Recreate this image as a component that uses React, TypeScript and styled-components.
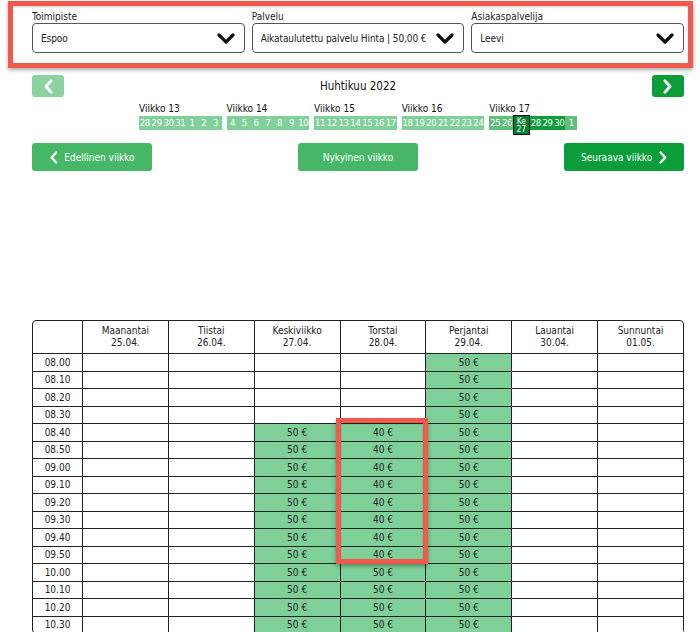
import styled, { createGlobalStyle } from "styled-components";

const GlobalStyle = createGlobalStyle`
  body {
    margin: 0;
    background: #fff;
    font-family: "DejaVu Sans Condensed", "DejaVu Sans", sans-serif;
    font-stretch: condensed;
    color: #222;
  }
`;

const times = [
  "08.00", "08.10", "08.20", "08.30", "08.40", "08.50", "09.00", "09.10",
  "09.20", "09.30", "09.40", "09.50", "10.00", "10.10", "10.20", "10.30",
];

const days = [
  { name: "Maanantai", date: "25.04." },
  { name: "Tiistai", date: "26.04." },
  { name: "Keskiviikko", date: "27.04." },
  { name: "Torstai", date: "28.04." },
  { name: "Perjantai", date: "29.04." },
  { name: "Lauantai", date: "30.04." },
  { name: "Sunnuntai", date: "01.05." },
];

// price for a given day index and time row, or null when not bookable
const priceFor = (day: number, row: number): string | null => {
  if (day === 4) return "50 €";
  if (day === 2 && row >= 4) return "50 €";
  if (day === 3 && row >= 4) return row <= 11 ? "40 €" : "50 €";
  return null;
};

type DayTone = "light" | "mid" | "dark" | "today";

const weeks: { label: string; days: { n: string; tone: DayTone }[] }[] = [
  { label: "Viikko 13", days: ["28", "29", "30", "31", "1", "2", "3"].map((n) => ({ n, tone: "light" as DayTone })) },
  { label: "Viikko 14", days: ["4", "5", "6", "7", "8", "9", "10"].map((n) => ({ n, tone: "light" as DayTone })) },
  { label: "Viikko 15", days: ["11", "12", "13", "14", "15", "16", "17"].map((n) => ({ n, tone: "light" as DayTone })) },
  { label: "Viikko 16", days: ["18", "19", "20", "21", "22", "23", "24"].map((n) => ({ n, tone: "light" as DayTone })) },
  {
    label: "Viikko 17",
    days: [
      { n: "25", tone: "mid" },
      { n: "26", tone: "mid" },
      { n: "27", tone: "today" },
      { n: "28", tone: "dark" },
      { n: "29", tone: "dark" },
      { n: "30", tone: "dark" },
      { n: "1", tone: "mid" },
    ],
  },
];

const Chevron = ({ dir, size = 13 }: { dir: "left" | "right" | "down"; size?: number }) => {
  if (dir === "down") {
    return (
      <svg width="18" height="11" viewBox="0 0 18 11">
        <polyline points="2,2 9,9 16,2" fill="none" stroke="#111" strokeWidth="3.2" strokeLinecap="round" strokeLinejoin="round" />
      </svg>
    );
  }
  const pts = dir === "left" ? "6,1.5 1.5,6.5 6,11.5" : "1.5,1.5 6,6.5 1.5,11.5";
  return (
    <svg width={size * 0.6} height={size} viewBox="0 0 7.5 13">
      <polyline points={pts} fill="none" stroke="#fff" strokeWidth="2.4" strokeLinecap="round" strokeLinejoin="round" />
    </svg>
  );
};

const App = () => {
  return (
    <Page>
      <GlobalStyle />
      <Filters>
        <Field>
          <Label>Toimipiste</Label>
          <Select>
            <span>Espoo</span>
            <Chevron dir="down" />
          </Select>
        </Field>
        <Field>
          <Label>Palvelu</Label>
          <Select>
            <span>Aikataulutettu palvelu Hinta | 50,00 €</span>
            <Chevron dir="down" />
          </Select>
        </Field>
        <Field>
          <Label>Asiakaspalvelija</Label>
          <Select>
            <span>Leevi</span>
            <Chevron dir="down" />
          </Select>
        </Field>
        <Highlight style={{ top: -9, left: -24, width: 685, height: 67 }} />
      </Filters>

      <MonthNav>
        <ArrowButton $tone="light">
          <Chevron dir="left" size={15} />
        </ArrowButton>
        <MonthTitle>Huhtikuu 2022</MonthTitle>
        <ArrowButton $tone="dark">
          <Chevron dir="right" size={15} />
        </ArrowButton>
      </MonthNav>

      <WeekStrip>
        {weeks.map((w) => (
          <Week key={w.label}>
            <WeekLabel>{w.label}</WeekLabel>
            <DayRow>
              {w.days.map((d) =>
                d.tone === "today" ? (
                  <Today key={d.n}>
                    <TodayLine>Ke</TodayLine>
                    <TodayLine>{d.n}</TodayLine>
                  </Today>
                ) : (
                  <DayCell key={d.n} $tone={d.tone}>
                    {d.n}
                  </DayCell>
                )
              )}
            </DayRow>
          </Week>
        ))}
      </WeekStrip>

      <ButtonRow>
        <WeekButton $tone="mid">
          <Chevron dir="left" />
          Edellinen viikko
        </WeekButton>
        <WeekButton $tone="mid">Nykyinen viikko</WeekButton>
        <WeekButton $tone="dark">
          Seuraava viikko
          <Chevron dir="right" />
        </WeekButton>
      </ButtonRow>

      <TableWrap>
        <Calendar>
          <colgroup>
            <col style={{ width: 49 }} />
            {days.map((d) => (
              <col key={d.name} />
            ))}
          </colgroup>
          <thead>
            <tr>
              <HeadCell />
              {days.map((d) => (
                <HeadCell key={d.name}>
                  {d.name}
                  <br />
                  {d.date}
                </HeadCell>
              ))}
            </tr>
          </thead>
          <tbody>
            {times.map((t, row) => (
              <tr key={t}>
                <TimeCell>{t}</TimeCell>
                {days.map((d, i) => {
                  const price = priceFor(i, row);
                  return (
                    <SlotCell key={d.name} $free={!!price}>
                      {price}
                    </SlotCell>
                  );
                })}
              </tr>
            ))}
          </tbody>
        </Calendar>
        <Highlight style={{ top: 98, left: 304, width: 92, height: 146 }} />
      </TableWrap>
    </Page>
  );
};

export default App;

const Page = styled.div`
  width: 652px;
  padding: 10px 16px 0 32px;
  font-size: 10px;
`;

const Filters = styled.div`
  position: relative;
  display: grid;
  grid-template-columns: repeat(3, 1fr);
  gap: 7px;
`;

const Field = styled.div`
  display: flex;
  flex-direction: column;
  min-width: 0;
`;

const Label = styled.label`
  font-size: 10px;
  line-height: 13px;
  color: #222;
`;

const Select = styled.div`
  height: 30px;
  box-sizing: border-box;
  border: 1px solid #555;
  border-radius: 4px;
  display: flex;
  align-items: center;
  justify-content: space-between;
  gap: 6px;
  padding: 0 9px 0 8px;
  font-size: 10px;
  background: #fff;

  span {
    white-space: nowrap;
    overflow: hidden;
    letter-spacing: -0.1px;
  }

  svg {
    flex-shrink: 0;
  }
`;

const Highlight = styled.div`
  position: absolute;
  box-sizing: border-box;
  border: 5px solid #f05a4d;
  box-shadow: 0 2px 4px rgba(0, 0, 0, 0.35), inset 0 1px 2px rgba(0, 0, 0, 0.2);
  pointer-events: none;
`;

const MonthNav = styled.div`
  margin-top: 22px;
  display: flex;
  align-items: center;
  justify-content: space-between;
  height: 22px;
`;

const ArrowButton = styled.div<{ $tone: "light" | "dark" }>`
  width: 32px;
  height: 22px;
  border-radius: 3px;
  display: flex;
  align-items: center;
  justify-content: center;
  background: ${(p) => (p.$tone === "light" ? "#8bd3a0" : "#0c9d3b")};
`;

const MonthTitle = styled.div`
  font-size: 11.5px;
  color: #111;
`;

const WeekStrip = styled.div`
  margin-top: 6px;
  display: flex;
  justify-content: center;
  gap: 5px;
`;

const Week = styled.div`
  display: flex;
  flex-direction: column;
`;

const WeekLabel = styled.div`
  font-size: 10px;
  line-height: 12px;
  margin-bottom: 1px;
  color: #111;
`;

const DayRow = styled.div`
  display: flex;
  height: 14px;
  align-items: flex-start;
`;

const toneColors: Record<string, string> = {
  light: "#80d09a",
  mid: "#5ec07a",
  dark: "#0e9d3c",
};

const DayCell = styled.div<{ $tone: DayTone }>`
  width: 11.8px;
  height: 14px;
  line-height: 14px;
  text-align: center;
  font-size: 9.5px;
  letter-spacing: -0.4px;
  color: #fff;
  background: ${(p) => toneColors[p.$tone]};
`;

const Today = styled.div`
  position: relative;
  top: -1px;
  width: 17px;
  height: 20px;
  box-sizing: border-box;
  border: 1.5px solid #111;
  background: #0a7d2f;
  color: #fff;
  display: flex;
  flex-direction: column;
  align-items: center;
  justify-content: center;
`;

const TodayLine = styled.span`
  display: block;
  font-size: 8.5px;
  line-height: 8.5px;
  height: 8.5px;
`;

const ButtonRow = styled.div`
  margin-top: 13px;
  display: flex;
  justify-content: space-between;
`;

const WeekButton = styled.div<{ $tone: "mid" | "dark" }>`
  width: 120px;
  height: 28px;
  border-radius: 3px;
  display: flex;
  align-items: center;
  justify-content: center;
  gap: 7px;
  color: #fff;
  font-size: 10px;
  background: ${(p) => (p.$tone === "mid" ? "#46b767" : "#0c9d3b")};
`;

const TableWrap = styled.div`
  position: relative;
  margin-top: 149px;
`;

const Calendar = styled.table`
  width: 652px;
  table-layout: fixed;
  border-collapse: separate;
  border-spacing: 0;
  border: 1px solid #222;
  border-radius: 4px;
  font-size: 10px;

  th + th,
  td + td {
    border-left: 1px solid #222;
  }
`;

const HeadCell = styled.th`
  height: 32px;
  padding: 0;
  font-weight: normal;
  line-height: 12px;
  text-align: center;
  color: #222;
`;

const TimeCell = styled.td`
  height: 16.5px;
  padding: 0;
  text-align: center;
  border-top: 1px solid #222;
  color: #222;
`;

const SlotCell = styled.td<{ $free: boolean }>`
  height: 16.5px;
  padding: 0;
  text-align: center;
  border-top: 1px solid #222;
  background: ${(p) => (p.$free ? "#7fcf98" : "#fff")};
  color: #222;
`;
